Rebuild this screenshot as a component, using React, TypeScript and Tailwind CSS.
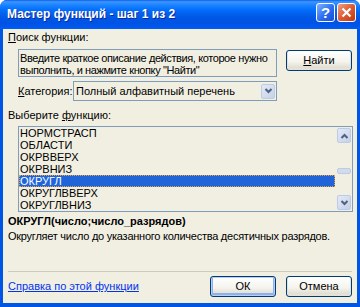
import type { ReactNode } from "react";

const ITEMS = ["НОРМСТРАСП", "ОБЛАСТИ", "ОКРВВЕРХ", "ОКРВНИЗ", "ОКРУГЛ", "ОКРУГЛВВЕРХ", "ОКРУГЛВНИЗ"];
const SELECTED = 4;

function XpButton({ children, primary }: { children: ReactNode; primary?: boolean }) {
  return (
    <button
      className={
        "w-[66px] h-[21px] rounded-[3px] border border-[#003c74] bg-[linear-gradient(180deg,#ffffff_0%,#f5f4ee_55%,#e3e0d5_85%,#d6d0c5_100%)] text-[11px] leading-none text-black " +
        (primary ? "shadow-[inset_0_0_0_1px_#b6cdf6,inset_0_-1px_0_2px_#8fb0ee]" : "shadow-[inset_0_-1px_0_1px_#e4e2d8]")
      }
    >
      {children}
    </button>
  );
}

function Arrow({ up }: { up?: boolean }) {
  return (
    <svg width="9" height="6" viewBox="0 0 9 6">
      <path d={up ? "M1.5 5 L4.5 2 L7.5 5" : "M1.5 1 L4.5 4 L7.5 1"} fill="none" stroke="#4d6185" strokeWidth="2" />
    </svg>
  );
}

function ScrollBtn({ up }: { up?: boolean }) {
  return (
    <div className="w-[14px] h-[15px] rounded-[2px] border border-[#bccbe8] bg-[linear-gradient(135deg,#e3e9f6,#c6d1e8)] flex items-center justify-center">
      <Arrow up={up} />
    </div>
  );
}

export default function App() {
  return (
    <div className="w-[360px] h-[307px] flex flex-col bg-[#0055e5] rounded-t-[7px] overflow-hidden font-['Liberation_Sans',Arial,sans-serif] text-[11px] text-black">
      {/* title bar */}
      <div className="h-[29px] flex items-start justify-between bg-[linear-gradient(180deg,#0a5fe8_0%,#3d95ff_6%,#2a8cff_12%,#127dff_22%,#036ffc_34%,#0262ee_46%,#0057e5_62%,#0054e3_78%,#0055eb_90%,#0060f6_100%)]">
        <span className="pl-[7px] pt-[6px] text-[12px] font-bold leading-[16px] text-white [text-shadow:1px_1px_0_#0c2a9e]">
          Мастер функций - шаг 1 из 2
        </span>
        <div className="flex gap-[2px] pt-[3px] pr-[4px]">
          <div className="w-[19px] h-[19px] rounded-[3px] border border-white bg-[linear-gradient(135deg,#7fb2ff,#2a6cf0_55%,#1550d8)] flex items-center justify-center text-white font-bold text-[15px] leading-none">
            ?
          </div>
          <div className="w-[19px] h-[19px] rounded-[3px] border border-white bg-[linear-gradient(135deg,#f0a084,#dc5b33_50%,#c2380f)] flex items-center justify-center">
            <svg width="11" height="11" viewBox="0 0 11 11">
              <path d="M1.5 1.5 L9.5 9.5 M9.5 1.5 L1.5 9.5" stroke="#fff" strokeWidth="2.2" />
            </svg>
          </div>
        </div>
      </div>

      {/* body */}
      <div className="flex-1 mx-[3px] mb-[4px] bg-[#f1efe2] pl-[5px] pr-[5px] pt-[2px] flex flex-col">
        <div className="h-[13px] leading-[13px]">
          <span className="underline">П</span>оиск функции:
        </div>

        <div className="mt-[5px] flex items-start">
          <div className="ml-[10px] w-[259px] h-[28px] border border-[#7f9db9] px-[1px] pt-[2px] leading-[12px] tracking-[-0.4px] whitespace-nowrap overflow-hidden">
            Введите краткое описание действия, которое нужно
            <br />
            выполнить, и нажмите кнопку "Найти"
          </div>
          <div className="ml-[9px] mt-[1px]">
            <XpButton>
              <span className="underline">Н</span>айти
            </XpButton>
          </div>
        </div>

        <div className="mt-[4px] flex items-center h-[20px]">
          <div className="ml-[10px] w-[55px]">
            <span className="underline">К</span>атегория:
          </div>
          <div className="w-[204px] h-[20px] border border-[#7f9db9] flex items-center justify-between pl-[2px] pr-[1px]">
            <span>Полный алфавитный перечень</span>
            <ScrollBtn />
          </div>
        </div>

        <div className="mt-[8px] h-[13px] leading-[13px]">
          Выберите <span className="underline">ф</span>ункцию:
        </div>

        <div className="mt-[4px] ml-[10px] w-[335px] h-[86px] border border-[#7f9db9] flex">
          <div className="flex-1 flex flex-col pr-[1px]">
            {ITEMS.map((it, i) => (
              <div
                key={it}
                className={
                  "h-[12px] leading-[12px] pl-[1px] " +
                  (i === SELECTED ? "bg-[#2064d8] text-white outline-1 outline-dotted outline-[#e8a040] -outline-offset-1" : "")
                }
              >
                {it}
              </div>
            ))}
          </div>
          <div className="w-[16px] flex flex-col items-center justify-between py-[1px]">
            <ScrollBtn up />
            <div className="flex-1 w-full flex flex-col items-center pt-[25px]">
              <div className="w-[14px] h-[6px] rounded-[2px] border border-[#bccbe8] bg-[#d3dbeb]" />
            </div>
            <ScrollBtn />
          </div>
        </div>

        <div className="mt-[3px] h-[13px] leading-[13px] font-bold">ОКРУГЛ(число;число_разрядов)</div>
        <div className="mt-[2px] h-[13px] leading-[13px] tracking-[-0.25px] whitespace-nowrap">
          Округляет число до указанного количества десятичных разрядов.
        </div>

        <div className="mt-[28px] h-px bg-[#cdcbbf]" />

        <div className="mt-[4px] h-[21px] flex items-center">
          <a className="text-[#0033ee] underline cursor-pointer">Справка по этой функции</a>
          <div className="ml-auto flex gap-[10px]">
            <XpButton primary>ОК</XpButton>
            <XpButton>Отмена</XpButton>
          </div>
        </div>
      </div>
    </div>
  );
}
